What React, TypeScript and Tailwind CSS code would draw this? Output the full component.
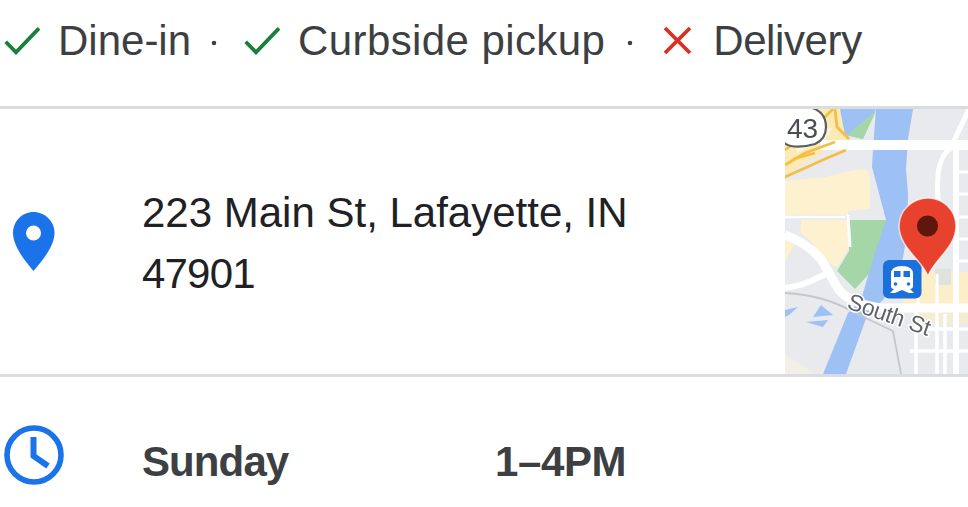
import React from "react";

const font = { fontFamily: '"Liberation Sans", Arial, sans-serif' };

function Check() {
  return (
    <svg width="36" height="28" viewBox="0 0 36 28" className="shrink-0 block" fill="none">
      <path d="M1.7 14.7 L12 25.300 L35 1.300" stroke="#188038" strokeWidth="3.800" />
    </svg>
  );
}

function Cross() {
  return (
    <svg width="32" height="32" viewBox="0 0 32 32" className="shrink-0 block" fill="none">
      <path d="M3 3 L28 28 M28 3 L3 28" stroke="#d93025" strokeWidth="3.800" />
    </svg>
  );
}

function Pin() {
  return (
    <svg width="44" height="60" viewBox="0 0 44 60" fill="none">
      <path
        d="M21.5 1 C33 1 42.5 10.5 42.5 22 C42.5 35 30 50 21.5 60 C13 50 1 35 1 22 C1 10.5 10 1 21.5 1 Z"
        fill="#1a73e8"
      />
      <circle cx="21.5" cy="22" r="7.5" fill="#fff" />
    </svg>
  );
}

function Clock() {
  return (
    <svg width="60" height="60" viewBox="0 0 60 60" fill="none">
      <circle cx="30" cy="30" r="27" stroke="#1a73e8" strokeWidth="5.600" />
      <path d="M29.500 12 V31 L44 41" stroke="#1a73e8" strokeWidth="6" />
    </svg>
  );
}

function MapThumb() {
  return (
    <svg viewBox="0 0 183 265" className="h-full w-full block" style={font}>
      <defs>
        <filter id="soft"><feGaussianBlur stdDeviation="0.7" /></filter>
        <filter id="softer"><feGaussianBlur stdDeviation="0.35" /></filter>
      </defs>
      <rect width="183" height="265" fill="#e8eaed" />
      <g filter="url(#soft)">
        {/* tan blocks */}
        <path d="M0 72 L40 68 Q70 60 80 60 Q86 64 85 80 L85 100 L63 102 L63 106 L0 106 Z" fill="#fdf1cf" />
        <path d="M16 111 L63 111 L65 138 L52 158 L36 150 Q28 130 16 125 Z" fill="#fdf1cf" />
        <path d="M0 131 L12 131 L0 152 Z" fill="#fdf1cf" />
        <path d="M0 0 L55 0 L63 30 L40 42 L0 66 Z" fill="#fbe9b6" />
        <path d="M0 245 L30 265 L0 265 Z" fill="#f1efe6" />
        {/* park */}
        <path d="M63 111 L101 111 L102 120 L84 165 L70 180 L52 162 L64 142 Z" fill="#a5d6a7" />
        {/* river */}
        <path
          d="M55 0 H128 L123 30 L121 60 L123 85 L122 125 L116 160 L98 191 L83 204 L61 265 H38 L63 204 L76 191 L88 150 L101 111 L95 88 L87 58 L88 40 L91 0 Z"
          fill="#9dc0f5"
        />
        <path d="M55 0 H91 L78 30 L60 26 Z" fill="#9dc0f5" />
        <path d="M62 26 L91 2 L78 30 Z" fill="#a5d6a7" />
        <path d="M0 201 L13 198 L4 206 L0 208 Z" fill="#9dc0f5" />
        <path d="M36 196 L48 206 L28 208 Z" fill="#9dc0f5" />
        <path d="M21 213 L43 211 L38 218 Z" fill="#9dc0f5" />
        {/* tan city blocks */}
        <path d="M118 163 H183 V196 H118 Z" fill="#fbeec9" />
        <path d="M130 203 H183 V215 H130 Z" fill="#fbeec9" opacity="0.7" />
        <rect x="150" y="160" width="16" height="16" fill="#dfe3dd" />
        {/* roads */}
        <g stroke="#fff" fill="none">
          <path d="M35 36 H183" strokeWidth="10" />
          <path d="M0 126 Q22 134 36 150 L52 178 Q62 194 95 199 L183 199" strokeWidth="9" />
          <path d="M0 179 Q20 176 30 170 L48 162" strokeWidth="6" />
          <path d="M60 108 H0" strokeWidth="2.500" />
          <path d="M186 -4 L165 40 Q150 50 153 90 L149 105" strokeWidth="5" />
          <path d="M171 40 V265" strokeWidth="6" />
          <path d="M152 196 V265 M131 200 V265 M160 205 V265" strokeWidth="3.500" />
          <path d="M125 242 H183 M128 220 H183" strokeWidth="3.500" />
          <path d="M172 63 H183 M172 85 H183 M172 108 H183 M172 130 H183 M172 152 H183" strokeWidth="3" />
          <path d="M152 165 V196 M133 165 V196" strokeWidth="3" />
          <path d="M63 106 L65 138" strokeWidth="3" />
        </g>
        <path d="M0 184 Q40 186 70 204 L108 222 L116 265" stroke="#c4c7cb" strokeWidth="1.800" fill="none" />
        {/* highway */}
        <g stroke="#f5bf42" fill="none" strokeWidth="2.800">
          <path d="M0 68 L40 50 L61 41" />
          <path d="M0 56 L20 44 L50 33" />
          <path d="M8 50 L30 44" />
          <path d="M0 41 L30 18 L48 0" />
          <path d="M50 0 L52 18 L64 30" />
        </g>
        <path d="M10 34 L48 18 L40 30 L12 44 Z" fill="#fff" opacity="0.55" />
      </g>
      <g filter="url(#softer)">
        {/* shield */}
        <path
          d="M-4 -2 L24 -2 Q41 2 41 18 Q41 30 30 35 Q16 39 6 37 Q0 36 -4 30 Z"
          fill="#fff"
          stroke="#5a5d62"
          strokeWidth="2.200"
        />
        <text x="2" y="28.500" fontSize="28" fill="#4a4d52">43</text>
        {/* South St */}
        <g transform="translate(61,199) rotate(19)">
          <text fontSize="23" fill="#5f6368" stroke="#fff" strokeWidth="3" paintOrder="stroke" letterSpacing="-0.300">South St</text>
        </g>
        {/* transit */}
        <rect x="98" y="151" width="38.500" height="38.500" rx="6" fill="#1a6fdc" />
        <path d="M117 157 Q128 157 128 165 V177 Q128 180 125 180 L129 184 H124 L117 181 L110 184 H105 L109 180 Q106 180 106 177 V165 Q106 157 117 157 Z" fill="#fff" />
        <rect x="109" y="162" width="6.500" height="6" fill="#1a6fdc" />
        <rect x="118.500" y="162" width="6.500" height="6" fill="#1a6fdc" />
        <circle cx="110.500" cy="175" r="1.800" fill="#1a6fdc" />
        <circle cx="123.500" cy="175" r="1.800" fill="#1a6fdc" />
        {/* pin */}
        <path
          d="M143 89 C158 89 171 101 171 117 C171 138 150 150 143 167 C136 150 114 138 114 117 C114 101 128 89 143 89 Z"
          fill="#e8432f"
          stroke="#fff"
          strokeOpacity="0.7"
          strokeWidth="1.500"
        />
        <circle cx="142.500" cy="117" r="10.500" fill="#5e120c" />
      </g>
    </svg>
  );
}

export default function App() {
  return (
    <div className="w-[968px] h-[507px] overflow-hidden bg-white" style={font}>
      <div className="h-[109px] border-b-[3px] border-[#dadce0] flex items-start pt-[17px] text-[42px] leading-[48px] text-[#3c4043]">
        <div className="flex items-center whitespace-nowrap">
          <span className="ml-[4px] flex"><Check /></span>
          <span className="ml-[18px]">Dine-in</span>
          <span className="w-[6px] h-[6px] ml-[20px] rounded-full bg-[#3c4043] mt-[3px] scale-75" />
          <span className="ml-[27px] flex"><Check /></span>
          <span className="ml-[18px] tracking-[0.4px]">Curbside pickup</span>
          <span className="w-[6px] h-[6px] ml-[22px] rounded-full bg-[#3c4043] mt-[3px] scale-75" />
          <span className="ml-[29px] flex"><Cross /></span>
          <span className="ml-[19px] tracking-[-0.4px]">Delivery</span>
        </div>
      </div>
      <div className="h-[268px] border-b-[3px] border-[#dadce0] flex">
        <div className="w-[142px] shrink-0 flex pl-[12px] pt-[102px]">
          <div className="h-[60px]"><Pin /></div>
        </div>
        <div className="flex-1 pt-[73px] text-[42px] leading-[61px] text-[#202124]">
          <div>223 Main St, Lafayette, IN</div>
          <div className="tracking-[-0.8px]">47901</div>
        </div>
        <div className="w-[183px] shrink-0 h-[265px]">
          <MapThumb />
        </div>
      </div>
      <div className="flex">
        <div className="w-[142px] shrink-0 pl-[4px] pt-[48px]"><Clock /></div>
        <div className="pt-[60px] flex text-[42px] leading-[50px] font-bold text-[#3c4043]">
          <span className="w-[353px] tracking-[-0.9px]">Sunday</span>
          <span className="tracking-[-0.4px]">1–4PM</span>
        </div>
      </div>
    </div>
  );
}
